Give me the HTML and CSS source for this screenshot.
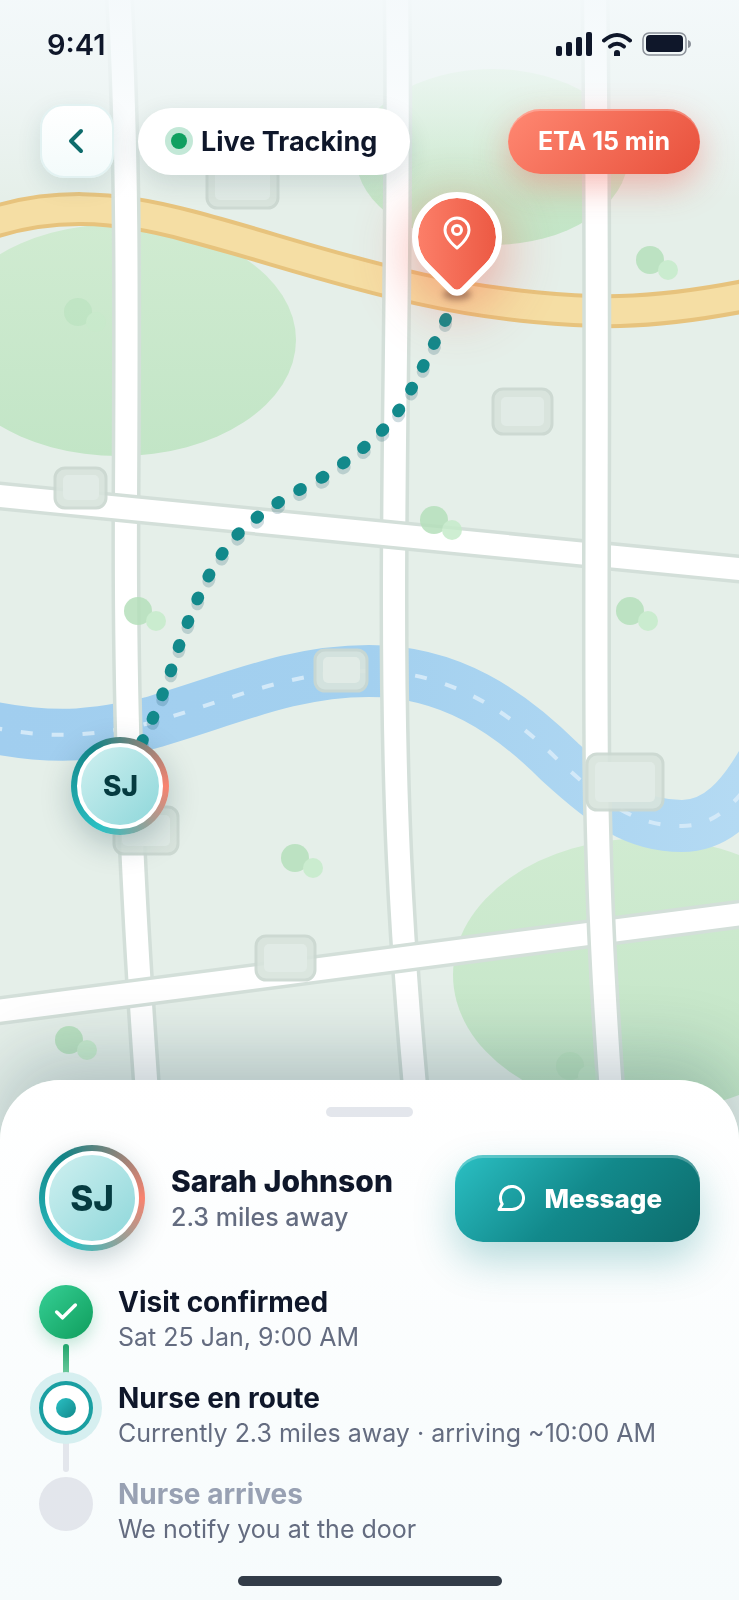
FILE: index.html
```html
<!DOCTYPE html>
<html lang="en">
<head>
    <meta charset="UTF-8">
    <meta name="viewport" content="width=device-width, initial-scale=1.0">
    <title>Live Tracking</title>
    <link rel="stylesheet" href="styles.css">
</head>
<body>
    <div class="screen">
        <div class="map">
            <svg class="map-art" viewBox="0 0 739 1160" preserveAspectRatio="xMidYMid slice" aria-hidden="true">
                <defs>
                    <linearGradient id="park" x1="0" y1="0" x2="0" y2="1">
                        <stop offset="0" stop-color="#d0ebd1"/>
                        <stop offset="1" stop-color="#c2e5c6"/>
                    </linearGradient>
                    <linearGradient id="river" gradientUnits="userSpaceOnUse" x1="0" y1="0" x2="739" y2="0">
                        <stop offset="0" stop-color="#a1ceef"/>
                        <stop offset=".5" stop-color="#a3d0ef"/>
                        <stop offset="1" stop-color="#b4daf3"/>
                    </linearGradient>
                    <g id="tree">
                        <circle r="14" fill="#b5e0bb"/>
                        <circle cx="18" cy="10" r="10" fill="#c6ebca"/>
                    </g>
                    <path id="v1" d="M119 -10C128 150 127 300 126 500C125 700 129 860 152 1160"/>
                    <path id="v2" d="M397 -10C400 200 394 400 394 600C394 780 398 920 422 1160"/>
                    <path id="v3" d="M595 -10C599 300 595 600 597 780C599 900 603 990 616 1160"/>
                    <path id="h1" d="M-10 495L749 570"/>
                    <path id="h2" d="M-10 1012L749 913"/>
                    <path id="highway" d="M-10 223C50 204 110 204 190 226C263 245 330 269 420 289C500 307 580 312 620 311C660 310 700 305 750 295"/>
                    <path id="water" d="M-10 727C60 741 100 734 150 723C230 700 290 671 369 671C450 671 510 712 560 762C605 803 635 826 682 826C715 826 742 803 772 745"/>
                    <path id="route" pathLength="527" d="M446 319C425 362 415 385 399 410C385 430 366 449 323 477C290 495 265 508 238 534C215 558 197 595 179 646C165 690 158 708 142 742"/>
                </defs>

                <!-- parks -->
                <g fill="url(#park)">
                    <ellipse cx="119" cy="340" rx="177" ry="116"/>
                    <ellipse cx="492" cy="157" rx="136" ry="88"/>
                    <ellipse cx="646" cy="975" rx="193" ry="137"/>
                </g>

                <!-- river -->
                <g fill="none">
                    <use href="#water" stroke="url(#river)" stroke-width="52"/>
                    <use href="#water" stroke="#d3e9f8" stroke-width="4" stroke-dasharray="12 19"/>
                </g>

                <!-- roads -->
                <g fill="none">
                    <use href="#highway" stroke="#e7c37d" stroke-width="34"/>
                    <use href="#highway" stroke="#f5dea4" stroke-width="26"/>
                    <g stroke="#d3dfd9" stroke-width="29">
                        <use href="#v1"/>
                        <use href="#v2"/>
                    </g>
                    <g stroke="#fff" stroke-width="22">
                        <use href="#v1"/>
                        <use href="#v2"/>
                    </g>
                    <g stroke="#d3dfd9" stroke-width="29">
                        <use href="#h1"/>
                        <use href="#h2"/>
                    </g>
                    <g stroke="#fff" stroke-width="22">
                        <use href="#h1"/>
                        <use href="#h2"/>
                    </g>
                    <use href="#v3" stroke="#d3dfd9" stroke-width="29"/>
                    <use href="#v3" stroke="#fff" stroke-width="22"/>
                </g>

                <!-- buildings -->
                <g class="blocks">
                    <rect x="207" y="155" width="71" height="53" rx="10"/>
                    <rect x="55" y="468" width="51" height="40" rx="10"/>
                    <rect x="493" y="389" width="59" height="45" rx="10"/>
                    <rect x="315" y="650" width="52" height="41" rx="10"/>
                    <rect x="114" y="807" width="64" height="47" rx="10"/>
                    <rect x="587" y="754" width="76" height="56" rx="10"/>
                    <rect x="256" y="936" width="59" height="44" rx="10"/>
                </g>
                <g class="roofs">
                    <rect x="215" y="163" width="55" height="37" rx="5"/>
                    <rect x="63" y="475" width="36" height="25" rx="5"/>
                    <rect x="501" y="397" width="43" height="29" rx="5"/>
                    <rect x="323" y="657" width="37" height="26" rx="5"/>
                    <rect x="122" y="815" width="48" height="31" rx="5"/>
                    <rect x="595" y="762" width="60" height="40" rx="5"/>
                    <rect x="264" y="944" width="43" height="28" rx="5"/>
                </g>

                <!-- trees -->
                <g opacity=".85">
                    <use href="#tree" x="650" y="260"/>
                    <use href="#tree" x="434" y="520"/>
                    <use href="#tree" x="138" y="611"/>
                    <use href="#tree" x="295" y="858"/>
                    <use href="#tree" x="630" y="611"/>
                    <use href="#tree" x="69" y="1040"/>
                </g>
                <g opacity=".5">
                    <use href="#tree" x="78" y="312"/>
                    <use href="#tree" x="570" y="1066"/>
                </g>

                <!-- route -->
                <g fill="none" stroke-width="12" stroke-linecap="round" stroke-dasharray="2 23">
                    <use href="#route" y="5" stroke="#0f5064" stroke-opacity=".2"/>
                    <use href="#route" stroke="#12898b"/>
                </g>
            </svg>
            <div class="map-fade"></div>

            <div class="pin">
                <div class="pin-ground"></div>
                <div class="pin-drop"></div>
                <svg class="pin-icon" viewBox="0 0 24 24" aria-hidden="true">
                    <path d="M20 10c0 6-8 12-8 12s-8-6-8-12a8 8 0 0 1 16 0Z"/>
                    <circle cx="12" cy="10" r="3"/>
                </svg>
            </div>
            <div class="avatar avatar-marker"><span>SJ</span></div>
        </div>

        <div class="status-bar">
            <span class="time">9:41</span>
            <div class="status-icons">
                <svg width="36" height="24" viewBox="0 0 36 24" aria-hidden="true">
                    <rect x="0" y="14" width="6" height="10" rx="2"/>
                    <rect x="10" y="10" width="6" height="14" rx="2"/>
                    <rect x="20" y="5" width="6" height="19" rx="2"/>
                    <rect x="30" y="0" width="6" height="24" rx="2"/>
                </svg>
                <svg width="30" height="24" viewBox="0 0 30 24" aria-hidden="true">
                    <path d="M2 8.500Q15 -2.500 28 8.500" fill="none" stroke="#0f172a" stroke-width="4" stroke-linecap="round"/>
                    <path d="M8 14.500Q15 9 22 14.500" fill="none" stroke="#0f172a" stroke-width="4" stroke-linecap="round"/>
                    <path d="M12 24V21Q12 18 15 18T18 21V24Z"/>
                </svg>
                <svg width="50" height="24" viewBox="0 0 50 24" aria-hidden="true">
                    <rect x="1" y="1" width="43" height="22" rx="6" fill="none" stroke="#8b9199" stroke-width="1.500"/>
                    <rect x="4" y="3" width="37" height="17" rx="4"/>
                    <path d="M46 8Q49 9 49 12T46 16Z" fill="#8b9199"/>
                </svg>
            </div>
        </div>

        <header class="top-bar">
            <button class="back" type="button" aria-label="Back">
                <svg viewBox="0 0 24 24" aria-hidden="true"><path d="m15 18-6-6 6-6"/></svg>
            </button>
            <div class="live"><span class="live-dot"></span>Live Tracking</div>
            <div class="eta">ETA 15 min</div>
        </header>

        <main class="sheet">
            <div class="handle"></div>

            <section class="nurse">
                <div class="avatar avatar-large"><span>SJ</span></div>
                <div class="nurse-info">
                    <h1>Sarah Johnson</h1>
                    <p>2.3 miles away</p>
                </div>
                <button class="message" type="button">
                    <svg viewBox="0 0 28 26" aria-hidden="true"><path d="M2 24.500L5.200 19A11.500 11.500 0 1 1 15 24.500Z"/></svg>
                    Message
                </button>
            </section>

            <ol class="timeline">
                <li class="step done">
                    <div class="rail">
                        <span class="node">
                            <svg viewBox="0 0 24 24" aria-hidden="true"><path d="M20 6 9 17l-5-5"/></svg>
                        </span>
                        <span class="line"></span>
                    </div>
                    <div class="step-text">
                        <h2>Visit confirmed</h2>
                        <p>Sat 25 Jan, 9:00 AM</p>
                    </div>
                </li>
                <li class="step current">
                    <div class="rail">
                        <span class="node"></span>
                        <span class="line"></span>
                    </div>
                    <div class="step-text">
                        <h2>Nurse en route</h2>
                        <p>Currently 2.3 miles away · arriving ~10:00 AM</p>
                    </div>
                </li>
                <li class="step pending">
                    <div class="rail">
                        <span class="node"></span>
                    </div>
                    <div class="step-text">
                        <h2>Nurse arrives</h2>
                        <p>We notify you at the door</p>
                    </div>
                </li>
            </ol>

            <div class="home-indicator"></div>
        </main>
    </div>
</body>
</html>
```
FILE: styles.css
```css
:root {
    --ink: #0f172a;
    --muted: #646c80;
    --teal: #12898b;
    --teal-light: #2bc0c4;
    --teal-dark: #0d6b6b;
    --coral: #f9836f;
    --green: #10a060;
    --grey: #e3e6ec;
    --land: #e5efe9;
}
* {
    box-sizing: border-box;
}
body {
    margin: 0;
    font-family: Inter, "Liberation Sans", sans-serif;
    color: var(--ink);
    background: var(--land);
}
h1, h2, p, ol {
    margin: 0;
    padding: 0;
}
button {
    font-family: inherit;
    border: none;
    cursor: pointer;
}
.screen {
    position: relative;
    display: flex;
    flex-direction: column;
    min-height: 100vh;
    overflow: hidden;
}

/* map */
.map {
    position: absolute;
    top: 0;
    left: 0;
    width: 100%;
    aspect-ratio: 739 / 1160;
}
.map-art {
    display: block;
    width: 100%;
    height: 100%;
}
.blocks {
    fill: #d8e4dd;
    stroke: #cbd8d1;
    stroke-width: 3px;
    opacity: 0.92;
}
.roofs {
    fill: #e1ebe6;
}
.map-fade {
    position: absolute;
    top: 0;
    left: 0;
    right: 0;
    height: 200px;
    background: linear-gradient(rgba(244, 249, 251, 0.95), rgba(244, 249, 251, 0.7) 40%, rgba(244, 249, 251, 0));
}

.pin {
    position: absolute;
    left: 61.8%;
    top: 20.4%;
    width: 90px;
    height: 90px;
    transform: translate(-50%, -50%);
}
.pin-drop {
    width: 90px;
    height: 90px;
    border: 6px solid #fff;
    border-radius: 50% 50% 12px 50%;
    background: linear-gradient(45deg, #ff8670, #e9523c) padding-box, #fff;
    transform: rotate(45deg);
    box-shadow: 10px 10px 56px 2px rgba(240, 80, 65, 0.45);
}
.pin-ground {
    position: absolute;
    left: 31px;
    bottom: -18px;
    width: 28px;
    height: 12px;
    border-radius: 50%;
    background: rgba(60, 50, 40, 0.5);
    filter: blur(3px);
    z-index: 0;
}
.pin-drop, .pin-icon {
    position: absolute;
    z-index: 1;
}
.pin-icon {
    top: 23px;
    left: 27px;
    width: 36px;
    height: 36px;
    fill: none;
    stroke: #fff;
    stroke-width: 2;
    stroke-linejoin: round;
}

.avatar {
    display: grid;
    padding: 6px;
    border-radius: 50%;
    background: conic-gradient(from 205deg, var(--teal-light), #128487 120deg, var(--coral) 245deg, var(--teal-light));
    color: #053b40;
    font-weight: 800;
}
.avatar span {
    display: grid;
    place-items: center;
    border: 4px solid #fff;
    border-radius: 50%;
    background: linear-gradient(135deg, #cff0f0, #8ed7da);
}
.avatar-marker {
    position: absolute;
    left: 16.3%;
    top: 67.8%;
    width: 98px;
    height: 98px;
    transform: translate(-50%, -50%);
    font-size: 28px;
    box-shadow: 0 10px 30px rgba(15, 60, 70, 0.25);
}
.avatar-large {
    flex: none;
    width: 106px;
    height: 106px;
    font-size: 35px;
    box-shadow: 0 8px 24px rgba(15, 60, 70, 0.22);
}

/* status bar and header */
.status-bar {
    position: relative;
    display: flex;
    align-items: center;
    justify-content: space-between;
    height: 88px;
    padding: 0 47px;
}
.time {
    font-size: 29px;
    font-weight: 600;
}
.status-icons {
    display: flex;
    gap: 10px;
    fill: var(--ink);
}
.top-bar {
    position: relative;
    display: flex;
    align-items: center;
    margin-top: 16px;
    padding: 0 39px 0 40px;
}
.back {
    display: grid;
    place-items: center;
    width: 74px;
    height: 74px;
    padding: 0;
    border: 2px solid #e3f2f2;
    border-radius: 24px;
    background: linear-gradient(#fff, #f3fbfb);
    box-shadow: 0 8px 24px rgba(15, 70, 80, 0.12);
}
.back svg {
    width: 40px;
    height: 40px;
    margin-right: 2px;
    fill: none;
    stroke: var(--teal-dark);
    stroke-width: 2.4;
    stroke-linecap: round;
    stroke-linejoin: round;
}
.live {
    display: flex;
    align-items: center;
    gap: 14px;
    height: 67px;
    margin-left: 24px;
    padding: 0 33px;
    border-radius: 34px;
    background: #fff;
    font-size: 27px;
    font-weight: 700;
    box-shadow: 0 8px 24px rgba(15, 50, 60, 0.14);
}
.live-dot {
    width: 16px;
    height: 16px;
    border-radius: 50%;
    background: var(--green);
    box-shadow: 0 0 0 6px #c3e8d7;
}
.eta {
    margin-left: auto;
    padding: 0 30px;
    border-radius: 33px;
    background: linear-gradient(135deg, #ff8872, #e8503b);
    color: #fff;
    font-size: 25px;
    font-weight: 700;
    line-height: 65px;
    box-shadow: 0 12px 34px rgba(240, 80, 65, 0.38), inset 0 2px 0 rgba(255, 255, 255, 0.25);
}

/* bottom sheet */
.sheet {
    position: relative;
    display: flex;
    flex-direction: column;
    margin-top: auto;
    padding: 27px 39px 14px;
    border-radius: 60px 60px 0 0;
    background: linear-gradient(#fff, #f6fbfc);
    box-shadow: 0 -24px 70px rgba(10, 50, 65, 0.24);
}
.handle {
    align-self: center;
    width: 87px;
    height: 10px;
    border-radius: 5px;
    background: var(--grey);
}
.nurse {
    display: flex;
    align-items: center;
    margin-top: 28px;
}
.nurse-info {
    margin-left: 26px;
}
h1 {
    font-size: 30px;
    font-weight: 800;
    line-height: 38px;
}
p {
    color: var(--muted);
    font-size: 25px;
    line-height: 35px;
}
.nurse-info p {
    font-weight: 500;
}
.message {
    display: flex;
    align-items: center;
    justify-content: center;
    gap: 20px;
    height: 87px;
    margin-left: auto;
    padding: 0 38px 0 42px;
    border-radius: 28px;
    background: linear-gradient(135deg, var(--teal-light), var(--teal) 50%, var(--teal-dark));
    color: #fff;
    font-size: 26px;
    font-weight: 800;
    box-shadow: 0 18px 40px rgba(18, 137, 139, 0.3), inset 0 3px 0 rgba(255, 255, 255, 0.25);
}
.message svg {
    width: 28px;
    height: 26px;
    fill: none;
    stroke: #fff;
    stroke-width: 3;
    stroke-linejoin: round;
}

.timeline {
    margin-top: 34px;
    list-style: none;
}
.step {
    display: flex;
    gap: 25px;
}
.step:not(:last-child) {
    min-height: 96px;
}
.rail {
    display: flex;
    flex-direction: column;
    align-items: center;
}
.node {
    position: relative;
    z-index: 1;
    display: grid;
    place-items: center;
    width: 54px;
    height: 54px;
    border-radius: 50%;
    background: var(--grey);
}
.line {
    flex: 1;
    width: 6px;
    margin: 5px 0;
    border-radius: 3px;
    background: var(--grey);
}
.done .node {
    background: linear-gradient(135deg, #36d096, #0f9d5c);
    box-shadow: 0 6px 16px rgba(16, 160, 96, 0.25);
}
.done .node svg {
    width: 28px;
    height: 28px;
    fill: none;
    stroke: #fff;
    stroke-width: 3;
    stroke-linecap: round;
    stroke-linejoin: round;
}
.done .line {
    background: linear-gradient(#22a66d, #6fcb9f);
}
.current .node {
    border: 4px solid #1a9fa2;
    background: #fff;
    box-shadow: 0 0 0 9px #d6eff0;
}
.current .node::after {
    content: "";
    width: 20px;
    height: 20px;
    border-radius: 50%;
    background: linear-gradient(135deg, var(--teal-light), var(--teal));
}
h2 {
    font-size: 28px;
    font-weight: 700;
    line-height: 35px;
}
.pending h2 {
    color: #98a1b3;
}
.home-indicator {
    align-self: center;
    width: 264px;
    height: 10px;
    margin-top: 29px;
    border-radius: 5px;
    background: #323c48;
}
```
